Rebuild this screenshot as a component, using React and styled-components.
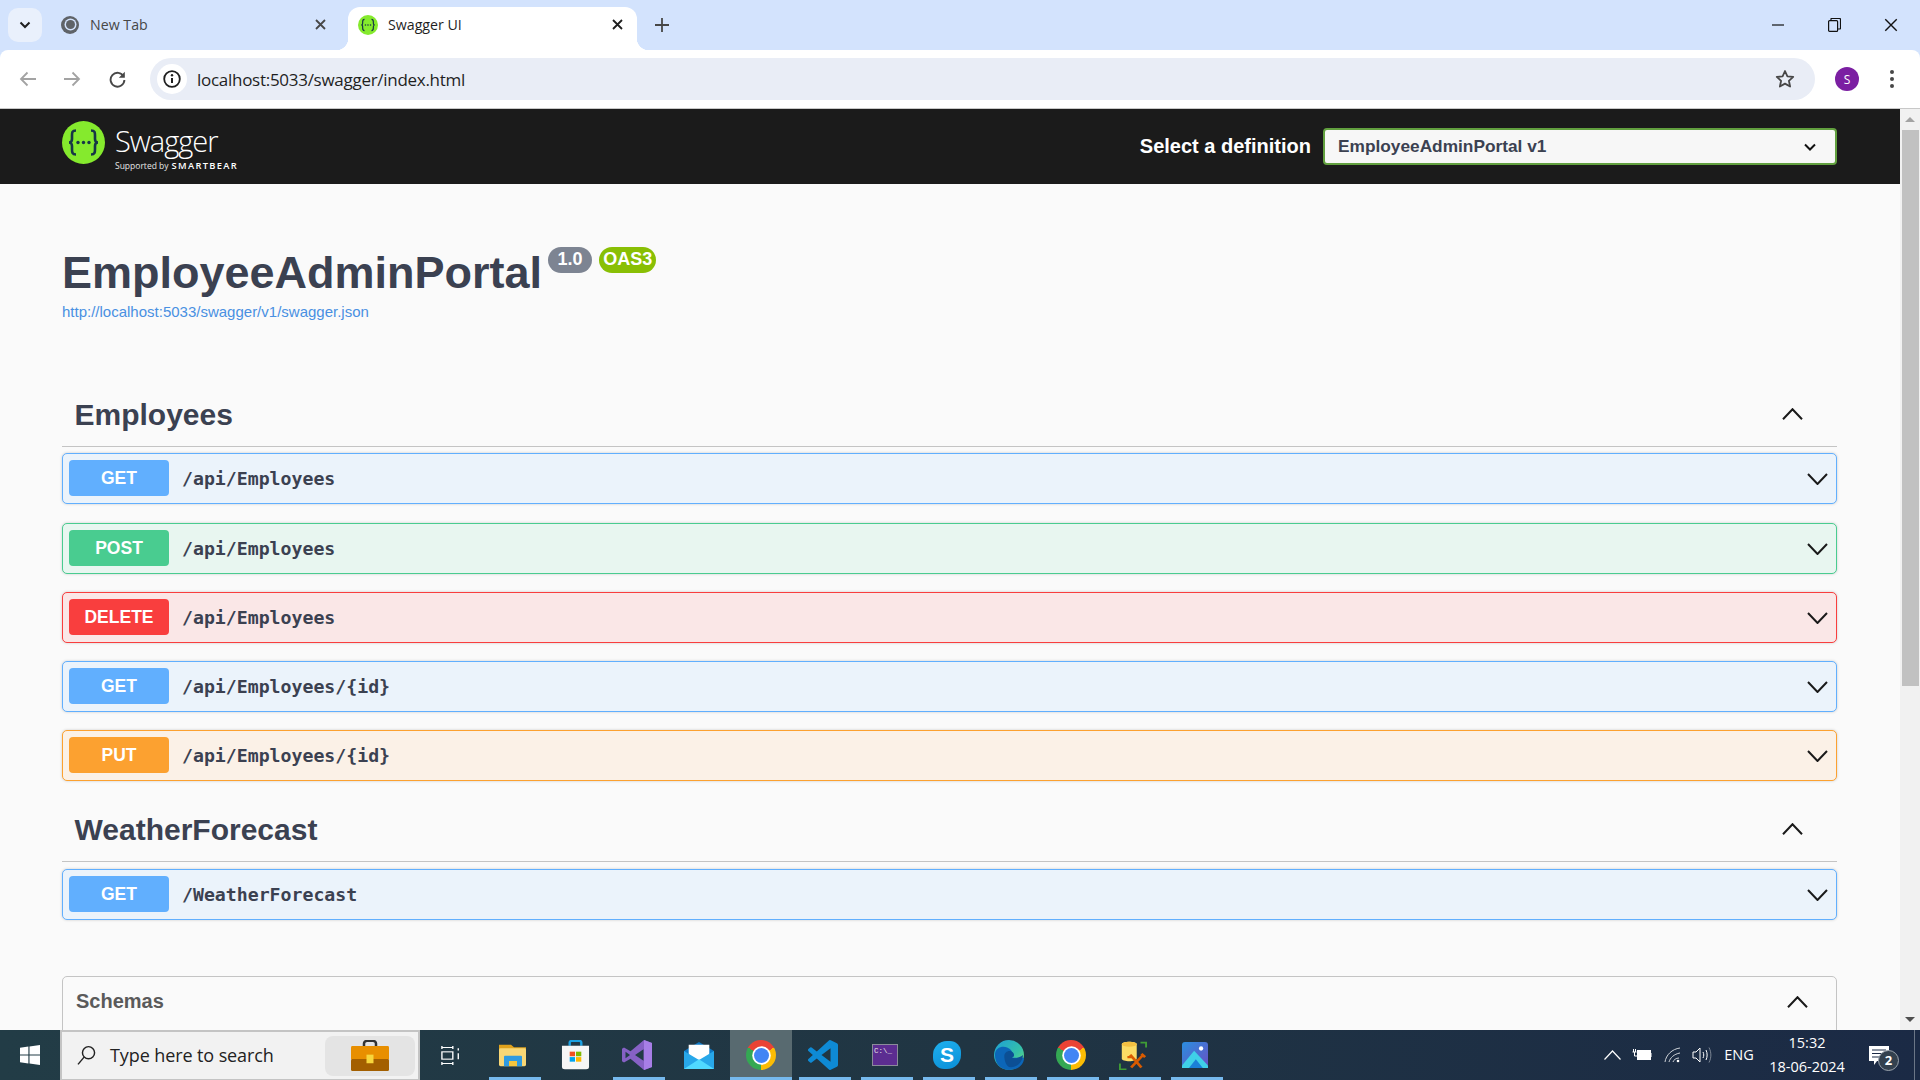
import React from "react"
import styled, { createGlobalStyle } from "styled-components"

const GlobalStyle = createGlobalStyle`
  html, body {
    margin: 0;
    padding: 0;
    height: 100%;
    overflow: hidden;
    background: #fafafa;
  }
  * { box-sizing: border-box; }
`

const UI_FONT = `"Open Sans", "Noto Sans", sans-serif`
const SWAGGER_FONT = `"Liberation Sans", Arial, sans-serif`

const methodColors = {
  GET: { solid: "#61affe", tint: "#ebf3fb" },
  POST: { solid: "#49cc90", tint: "#e8f6f0" },
  DELETE: { solid: "#f93e3e", tint: "#fae7e7" },
  PUT: { solid: "#fca130", tint: "#fbf1e7" },
}

const Screen = styled.div`
  width: 1920px;
  height: 1080px;
  display: flex;
  flex-direction: column;
  overflow: hidden;
  background: #d3e3fd;
`

/* browser chrome */
const TabStrip = styled.div`
  height: 50px;
  flex: none;
  display: flex;
  align-items: flex-end;
  font-family: ${UI_FONT};
`
const TabSearch = styled.div`
  width: 34px;
  height: 34px;
  margin: 0 8px 8px 8px;
  border-radius: 10px;
  background: #e9f0fc;
  display: flex;
  align-items: center;
  justify-content: center;
`
const Tab = styled.div`
  position: relative;
  height: 43px;
  display: flex;
  align-items: center;
  width: ${p => p.$width}px;
  padding: 0 12px 8px ${p => p.$pad}px;
  border-radius: 12px 12px 0 0;
  background: ${p => (p.$active ? "#fff" : "transparent")};
  color: ${p => (p.$active ? "#1f1f1f" : "#474747")};
  font-size: 14.2px;
  ${p =>
    p.$active &&
    `
    &::before, &::after {
      content: "";
      position: absolute;
      bottom: 0;
      width: 12px;
      height: 12px;
    }
    &::before {
      left: -12px;
      background: radial-gradient(circle at 0 0, transparent 12px, #fff 12.5px);
    }
    &::after {
      right: -12px;
      background: radial-gradient(circle at 100% 0, transparent 12px, #fff 12.5px);
    }
  `}
`
const TabTitle = styled.span`
  flex: 1;
  margin-left: ${p => p.$gap}px;
  white-space: nowrap;
`
const TabClose = styled.div`
  width: 16px;
  display: flex;
  justify-content: center;
  margin-right: ${p => p.$right}px;
  margin-top: -1px;
`
const NewTab = styled.div`
  margin: 0 0 18px 18px;
  display: flex;
`
const WindowControls = styled.div`
  margin-left: auto;
  margin-right: 1px;
  align-self: stretch;
  display: flex;
`
const WindowButton = styled.div`
  width: ${p => p.$w || 56}px;
  height: 50px;
  padding-bottom: 1px;
  display: flex;
  align-items: center;
  justify-content: center;
`
const Toolbar = styled.div`
  height: 59px;
  flex: none;
  display: flex;
  align-items: flex-start;
  padding: 8px 26px 0 6px;
  background: #fff;
  border-radius: 8px 8px 0 0;
  border-bottom: 1px solid #c8c8c8;
  font-family: ${UI_FONT};
`
const NavButton = styled.div`
  width: ${p => p.$w || 44}px;
  height: 42px;
  display: flex;
  align-items: center;
  justify-content: center;
`
const Omnibox = styled.div`
  flex: 1;
  height: 42px;
  margin-left: 10px;
  padding: 0 20px 0 7px;
  border-radius: 21px;
  background: #e9edf6;
  display: flex;
  align-items: center;
`
const SiteInfo = styled.div`
  width: 30px;
  height: 30px;
  border-radius: 50%;
  background: #fff;
  display: flex;
  align-items: center;
  justify-content: center;
`
const Url = styled.span`
  flex: 1;
  margin-left: 10px;
  font-size: 17px;
  color: #1f1f1f;
  letter-spacing: -0.28px;
`
const Avatar = styled.div`
  width: 24px;
  height: 24px;
  margin: 9px 0 0 20px;
  border-radius: 50%;
  background: #7b1fa2;
  color: #fff;
  font-size: 12px;
  display: flex;
  align-items: center;
  justify-content: center;
`
const MenuDots = styled.div`
  width: 4px;
  height: 42px;
  margin-left: 31px;
  display: flex;
  flex-direction: column;
  align-items: center;
  justify-content: center;
  gap: 3px;
  & > i {
    width: 4px;
    height: 4px;
    border-radius: 50%;
    background: #474747;
  }
`

/* page */
const Viewport = styled.div`
  flex: 1;
  min-height: 0;
  display: flex;
  background: #fafafa;
  overflow: hidden;
`
const Page = styled.div`
  flex: 1;
  min-width: 0;
  font-family: ${SWAGGER_FONT};
  color: #3b4151;
`
const Topbar = styled.header`
  height: 75px;
  padding: 0 63px 0 62px;
  background: #1b1b1b;
  display: flex;
  align-items: center;
`
const LogoWrap = styled.div`
  display: flex;
  align-items: flex-start;
`
const LogoText = styled.div`
  margin-left: 10px;
  color: #fff;
  display: flex;
  flex-direction: column;
`
const LogoName = styled.span`
  font-family: ${UI_FONT};
  font-size: 29px;
  line-height: 34px;
  font-weight: 300;
  letter-spacing: -1px;
  margin-top: 3px;
`
const LogoSub = styled.span`
  font-family: ${UI_FONT};
  font-size: 8.5px;
  line-height: 12px;
  margin-top: 2px;
  white-space: nowrap;
  color: #e6e6e6;
  & > b {
    font-size: 9.3px;
    font-weight: 600;
    letter-spacing: 1.35px;
    margin-left: 3px;
    color: #fff;
  }
`
const DefinitionWrap = styled.div`
  margin-left: auto;
  display: flex;
  align-items: center;
  gap: 12px;
`
const DefinitionLabel = styled.span`
  color: #fff;
  font-size: 20px;
  font-weight: 700;
`
const DefinitionSelect = styled.div`
  width: 514px;
  height: 37px;
  padding: 0 19px 0 13px;
  border: 2px solid #62a03f;
  border-radius: 4px;
  background: #f7f7f7;
  display: flex;
  align-items: center;
  justify-content: space-between;
  font-size: 17.3px;
  font-weight: 700;
  color: #3b4151;
`
const Content = styled.main`
  padding: 62px 63px 0 62px;
`
const TitleRow = styled.div`
  display: flex;
  align-items: flex-start;
  gap: 7px;
`
const Title = styled.h1`
  margin: 1px -1px -1px 0;
  font-size: 45px;
  line-height: 52px;
  font-weight: 700;
`
const Badge = styled.span`
  height: 26px;
  margin-top: 1px;
  padding: 0 ${p => p.$pad}px;
  border-radius: 13px;
  background: ${p => p.$color};
  color: #fff;
  font-size: 18px;
  font-weight: 700;
  line-height: 25px;
`
const SpecLink = styled.a`
  display: block;
  margin-top: 4px;
  font-size: 15px;
  line-height: 20px;
  color: #4990e2;
`
const SectionHeader = styled.div`
  height: 63px;
  margin-top: ${p => p.$top}px;
  padding: 0 34px 0 12.5px;
  border-bottom: 1px solid #c4c4c4;
  display: flex;
  align-items: center;
  justify-content: space-between;
`
const SectionName = styled.h3`
  margin: 0;
  font-size: 30px;
  font-weight: 700;
`
const SectionToggle = styled.div`
  display: flex;
  margin-top: -2px;
`
const OpRow = styled.div`
  height: 51px;
  margin-top: ${p => p.$top}px;
  padding: 0 8px 0 6px;
  border: 1px solid ${p => methodColors[p.$method].solid};
  border-radius: 5px;
  background: ${p => methodColors[p.$method].tint};
  box-shadow: 0 0 3px rgba(0, 0, 0, 0.19);
  display: flex;
  align-items: center;
`
const MethodBadge = styled.span`
  width: 100px;
  height: 36px;
  margin-bottom: 1px;
  border-radius: 4px;
  background: ${p => methodColors[p.$method].solid};
  color: #fff;
  font-size: 17.5px;
  font-weight: 700;
  line-height: 36px;
  text-align: center;
`
const OpPath = styled.span`
  flex: 1;
  margin-left: 13px;
  font-family: "DejaVu Sans Mono", "Liberation Mono", monospace;
  font-size: 18.2px;
  font-weight: 600;
  color: #3b4151;
`
const SchemasBox = styled.section`
  height: 200px;
  margin-top: 56px;
  padding: 11px 28px 0 13px;
  border: 1px solid #c4c4c4;
  border-radius: 5px;
  display: flex;
  align-items: flex-start;
  justify-content: space-between;
`
const SchemasTitle = styled.span`
  font-size: 20px;
  line-height: 26px;
  font-weight: 700;
  color: #5a5a5a;
`
const SchemasToggle = styled.div`
  display: flex;
  margin-top: 8px;
`
const Scrollbar = styled.div`
  width: 20px;
  flex: none;
  background: #f1f1f1;
  display: flex;
  flex-direction: column;
  align-items: center;
`
const ScrollArrow = styled.div`
  height: 21px;
  margin-top: ${p => (p.$down ? "auto" : "0")};
  display: flex;
  align-items: center;
  &::before {
    content: "";
    border-left: 5px solid transparent;
    border-right: 5px solid transparent;
    ${p => (p.$down ? "border-top: 5px solid #505050;" : "border-bottom: 5px solid #a3a3a3;")}
  }
`
const ScrollThumb = styled.div`
  width: 17px;
  height: 556px;
  background: #c1c1c1;
`

/* windows taskbar */
const Taskbar = styled.footer`
  height: 50px;
  flex: none;
  display: flex;
  align-items: stretch;
  background: linear-gradient(90deg, #223c46 0%, #203543 50%, #1b2a45 100%);
  font-family: ${UI_FONT};
`
const StartButton = styled.div`
  width: 60px;
  display: flex;
  align-items: center;
  justify-content: center;
`
const SearchBox = styled.div`
  width: 360px;
  padding: 0 3px 0 14px;
  border: 2px solid #c4c4c4;
  border-bottom-width: 1px;
  background: #f2f2f2;
  display: flex;
  align-items: center;
`
const SearchText = styled.span`
  flex: 1;
  margin-left: 13px;
  margin-top: -2px;
  font-size: 18px;
  letter-spacing: -0.1px;
  color: #222;
`
const SearchPromo = styled.div`
  width: 90px;
  height: 40px;
  border-radius: 8px;
  background: #e4e4e4;
  display: flex;
  align-items: center;
  justify-content: center;
`
const TaskItem = styled.div`
  position: relative;
  width: 62px;
  display: flex;
  align-items: center;
  justify-content: center;
  background: ${p => (p.$active ? "#586a70" : "transparent")};
  &::after {
    content: "";
    display: ${p => (p.$open ? "block" : "none")};
    position: absolute;
    bottom: 0;
    left: ${p => (p.$active ? 0 : 7)}px;
    right: ${p => (p.$active ? 0 : 3)}px;
    height: 3px;
    background: #76b9ed;
  }
`
const Tray = styled.div`
  margin-left: auto;
  display: flex;
  color: #fff;
`
const TrayItem = styled.div`
  position: relative;
  width: ${p => p.$w}px;
  display: flex;
  flex-direction: column;
  align-items: center;
  justify-content: center;
  font-size: ${p => p.$size || 14.5}px;
  line-height: 24px;
`
const NotifyBadge = styled.span`
  position: absolute;
  top: 20px;
  left: 26px;
  width: 21px;
  height: 21px;
  border-radius: 50%;
  border: 1px solid #9aa3ad;
  background: #33414f;
  color: #fff;
  font-size: 13px;
  font-weight: 700;
  line-height: 19px;
  text-align: center;
`
const ShowDesktop = styled.div`
  width: 14px;
  padding-left: 8px;
  &::before {
    content: "";
    display: block;
    width: 1px;
    height: 100%;
    background: #6b7686;
  }
`
const ChromeBall = styled.div`
  width: ${p => p.$size}px;
  height: ${p => p.$size}px;
  flex: none;
  border-radius: 50%;
  background: ${p =>
    p.$mono
      ? "#5f6368"
      : "conic-gradient(from 300deg, #ea4335 0 120deg, #fbbc04 120deg 240deg, #34a853 240deg 360deg)"};
  display: flex;
  align-items: center;
  justify-content: center;
  &::after {
    content: "";
    width: 50%;
    height: 50%;
    border-radius: 50%;
    background: ${p => (p.$mono ? "#5f6368" : "#4285f4")};
    box-shadow: 0 0 0 ${p => Math.max(p.$size * 0.06, 1.5)}px ${p => (p.$mono ? "#d3e3fd" : "#fff")};
  }
`
const SkypeIcon = styled.div`
  width: 28px;
  height: 28px;
  border-radius: 50% 40% 50% 40%;
  background: linear-gradient(160deg, #1fb0ee, #0a8fd8);
  color: #fff;
  font-family: ${SWAGGER_FONT};
  font-size: 21px;
  font-weight: 700;
  line-height: 28px;
  text-align: center;
`
const ConsoleIcon = styled.div`
  width: 26px;
  height: 22px;
  padding: 0 0 0 1px;
  border: 1px solid #8b8b9a;
  background: #5c2d91;
  color: #e6e6e6;
  font-family: "Liberation Mono", monospace;
  font-size: 7.5px;
  line-height: 12px;
`

const Chevron = ({ up, width = 21, height = 12, sw = 2 }) => (
  <svg width={width} height={height} viewBox="0 0 21 12" fill="none">
    <path
      d={up ? "M1 11.2L10.5 1.2 20 11.2" : "M1 1L10.5 11 20 1"}
      stroke="#1a1a1a"
      strokeWidth={sw}
    />
  </svg>
)

const CloseX = ({ color = "#474747", size = 11, sw = 1.8 }) => (
  <svg width={size} height={size} viewBox="0 0 11 11">
    <path d="M1 1l9 9M10 1l-9 9" stroke={color} strokeWidth={sw} />
  </svg>
)

const SwaggerMark = ({ size }) => (
  <svg width={size} height={size} viewBox="0 0 43 43">
    <circle cx="21.5" cy="21.5" r="21.5" fill="#85ea2d" />
    <g fill="none" stroke="#173647" strokeWidth="2.6">
      <path d="M14 9.5c-4 0-4 2-4 5v3.5c0 2-1 3.5-3 3.5 2 0 3 1.500 3 3.500V28c0 3 0 5.500 4 5.500" />
      <path d="M29 9.500c4 0 4 2 4 5V18c0 2 1 3.500 3 3.500-2 0-3 1.500-3 3.500v3c0 3 0 5.500-4 5.500" />
    </g>
    <g fill="#173647">
      <circle cx="16" cy="21.500" r="1.700" />
      <circle cx="21.500" cy="21.500" r="1.700" />
      <circle cx="27" cy="21.500" r="1.700" />
    </g>
  </svg>
)

const WindowsLogo = () => (
  <svg width="20" height="20" viewBox="0 0 21 21" fill="#fff">
    <path d="M0 3l8.800-1.300v8.300H0zM10 1.500L21 0v10H10zM0 11h8.800v8.400L0 18zM10 11h11v10l-11-1.600z" />
  </svg>
)

const Briefcase = () => (
  <svg width="38" height="31" viewBox="0 0 38 36" preserveAspectRatio="none">
    <path d="M13 8V4a3 3 0 0 1 3-3h6a3 3 0 0 1 3 3v4" fill="none" stroke="#333" strokeWidth="2.500" />
    <rect x="0" y="7" width="38" height="16" rx="1.500" fill="#e88f00" />
    <rect x="0" y="22" width="38" height="14" rx="1.500" fill="#a35f00" />
    <rect x="15.500" y="17" width="7" height="10" fill="#f7d63c" />
  </svg>
)

const TaskView = () => (
  <svg width="20" height="19" viewBox="0 0 22 26" fill="none" stroke="#fff" strokeWidth="1.500" preserveAspectRatio="none">
    <path d="M1 2h12M13 0v4M1 0v4M1 24h12M1 22v4M13 22v4" />
    <rect x="1" y="8" width="12" height="10" />
    <path d="M19 3v3M19 10v8" />
  </svg>
)

const FolderIcon = () => (
  <svg width="28" height="24" viewBox="0 0 28 28" preserveAspectRatio="none">
    <path d="M0 2h12l3 3h12v3H0z" fill="#e0a21c" />
    <rect x="0" y="6" width="27" height="21" rx="1.500" fill="#f8d775" />
    <path d="M5 27V16a1 1 0 0 1 1-1h16a1 1 0 0 1 1 1v11h-5v-6h-8v6z" fill="#2f9be0" />
    <rect x="10" y="21" width="8" height="6" fill="#f4c63d" />
  </svg>
)

const StoreIcon = () => (
  <svg width="29" height="30" viewBox="0 0 30 36" preserveAspectRatio="none">
    <path d="M9 7V3a2 2 0 0 1 2-2h8a2 2 0 0 1 2 2v4" fill="none" stroke="#1ba1e2" strokeWidth="2.500" />
    <path d="M1 7h28v25a3 3 0 0 1-3 3H4a3 3 0 0 1-3-3z" fill="#f6f6f6" />
    <rect x="9" y="14" width="5.500" height="5.500" fill="#f25022" />
    <rect x="15.500" y="14" width="5.500" height="5.500" fill="#7fba00" />
    <rect x="9" y="20.500" width="5.500" height="5.500" fill="#00a4ef" />
    <rect x="15.500" y="20.500" width="5.500" height="5.500" fill="#ffb900" />
  </svg>
)

const VisualStudioIcon = () => (
  <svg width="30" height="30" viewBox="0 0 30 36" preserveAspectRatio="none">
    <path d="M22 0l8 3.500v29L22 36 8.500 22.500 2 27l-2-1.500v-15L2 9l6.500 4.500z" fill="#8661c5" />
    <path d="M22 0l8 3.500v29L22 36z" fill="#a77ee6" />
    <path d="M21.500 11L13 18l8.500 7zM3.500 14v8L8 18z" fill="#223c46" />
  </svg>
)

const MailIcon = () => (
  <svg width="30" height="29" viewBox="0 0 32 32" preserveAspectRatio="none">
    <path d="M0 11L16 1l16 10v19H0z" fill="#0f7ac6" />
    <path d="M5 4h22v15L16 25 5 19z" fill="#fff" />
    <path d="M0 11l16 10 16-10v20H0z" fill="#28a8ea" />
    <path d="M0 31l16-11 16 11z" fill="#50d9ff" />
  </svg>
)

const VSCodeIcon = () => (
  <svg width="30" height="30" viewBox="0 0 24 24">
    <path
      fill="#0e8ad5"
      d="M23.150 2.587L18.210.21a1.494 1.494 0 0 0-1.705.29l-9.460 8.630-4.120-3.128a.999.999 0 0 0-1.276.057L.327 7.261A1 1 0 0 0 .326 8.740L3.899 12 .326 15.260a1 1 0 0 0 .001 1.479L1.650 17.940a.999.999 0 0 0 1.276.057l4.120-3.128 9.460 8.630a1.492 1.492 0 0 0 1.704.29l4.942-2.377A1.500 1.500 0 0 0 24 20.060V3.939a1.500 1.500 0 0 0-.85-1.352zm-5.146 14.861L10.826 12l7.178-5.448v10.896z"
    />
  </svg>
)

const EdgeIcon = () => (
  <svg width="30" height="30" viewBox="0 0 32 32">
    <defs>
      <linearGradient id="edgeTop" x1="0" y1="0" x2="1" y2="1">
        <stop offset="0" stopColor="#1d9fd8" />
        <stop offset="0.6" stopColor="#35c1a8" />
        <stop offset="1" stopColor="#7ce36d" />
      </linearGradient>
    </defs>
    <circle cx="16" cy="16" r="16" fill="url(#edgeTop)" />
    <path d="M1 16C1 8 9 6 14 8c6 2 7 8 4 11h14c0 8-7 13-16 13C7 32 1 25 1 16z" fill="#0c66b8" />
    <path d="M11 17c0-4 5-7 9-4 2 2 2 5-1 6 4 1 8 0 12-3-1 9-8 14-14 13-4-1-6-7-6-12z" fill="#0c4f94" />
  </svg>
)

const DatabaseToolIcon = () => (
  <svg width="28" height="29" viewBox="0 0 30 36" fill="none" preserveAspectRatio="none">
    <path d="M3 4c0-4 16-4 16 0v18c0 4-16 4-16 0z" fill="#fbdc65" />
    <ellipse cx="11" cy="4" rx="8" ry="3" fill="#f4c042" />
    <path d="M23 2h6v6M1 28v7h7" stroke="#3f9c35" strokeWidth="2" />
    <path d="M12 17l12 16M26 17L13 33M9 20l5 0M24 16l4 4" stroke="#d95b00" strokeWidth="3" />
  </svg>
)

const PhotosIcon = () => (
  <svg width="26" height="26" viewBox="0 0 30 30">
    <defs>
      <linearGradient id="photoBg" x1="0" y1="0" x2="1" y2="1">
        <stop offset="0" stopColor="#2a8fe0" />
        <stop offset="1" stopColor="#6a4fc3" />
      </linearGradient>
    </defs>
    <rect width="30" height="30" rx="3.500" fill="url(#photoBg)" />
    <circle cx="22" cy="7.500" r="2.500" fill="#fff" />
    <path d="M0 27L14 10l16 17v3H0z" fill="#3fd0e8" />
    <path d="M8 30l8-10 8 10z" fill="#1b7fd8" />
  </svg>
)

const taskApps = [
  { key: "explorer", icon: <FolderIcon />, open: true },
  { key: "store", icon: <StoreIcon /> },
  { key: "vs", icon: <VisualStudioIcon />, open: true },
  { key: "mail", icon: <MailIcon /> },
  { key: "chrome", icon: <ChromeBall $size={30} />, open: true, active: true },
  { key: "vscode", icon: <VSCodeIcon />, open: true },
  { key: "console", icon: <ConsoleIcon>C:\_</ConsoleIcon>, open: true },
  { key: "skype", icon: <SkypeIcon>S</SkypeIcon>, open: true },
  { key: "edge", icon: <EdgeIcon />, open: true },
  { key: "chrome2", icon: <ChromeBall $size={30} />, open: true },
  { key: "ssms", icon: <DatabaseToolIcon />, open: true },
  { key: "photos", icon: <PhotosIcon />, open: true },
]

const Operation = ({ method, path, top }) => (
  <OpRow $method={method} $top={top}>
    <MethodBadge $method={method}>{method}</MethodBadge>
    <OpPath>{path}</OpPath>
    <Chevron />
  </OpRow>
)

const App = () => (
  <Screen>
    <GlobalStyle />
    <TabStrip>
      <TabSearch>
        <svg width="12" height="8" viewBox="0 0 12 8" fill="none">
          <path d="M1.500 1.500L6 6l4.500-4.500" stroke="#1f1f1f" strokeWidth="2" />
        </svg>
      </TabSearch>
      <Tab $width="298" $pad="11">
        <ChromeBall $size={18} $mono />
        <TabTitle $gap="11">New Tab</TabTitle>
        <TabClose $right="8">
          <CloseX />
        </TabClose>
      </Tab>
      <Tab $active $width="289" $pad="10">
        <SwaggerMark size={20} />
        <TabTitle $gap="10">Swagger UI</TabTitle>
        <TabClose $right="0">
          <CloseX color="#1f1f1f" />
        </TabClose>
      </Tab>
      <NewTab>
        <svg width="14" height="14" viewBox="0 0 14 14">
          <path d="M7 0v14M0 7h14" stroke="#474747" strokeWidth="1.800" />
        </svg>
      </NewTab>
      <WindowControls>
        <WindowButton>
          <svg width="12" height="2" viewBox="0 0 12 2">
            <path d="M0 1h12" stroke="#111" strokeWidth="1.200" />
          </svg>
        </WindowButton>
        <WindowButton>
          <svg width="13" height="14" viewBox="0 0 13 14" fill="none" stroke="#111" strokeWidth="1.200">
            <rect x="0.600" y="2.600" width="9" height="10.800" rx="1" />
            <path d="M3 2.500V1a.5.5 0 0 1 .5-.5h8a1 1 0 0 1 1 1V10a1 1 0 0 1-1 1H10" />
          </svg>
        </WindowButton>
        <WindowButton $w={57}>
          <CloseX color="#111" size={14} sw={1.1} />
        </WindowButton>
      </WindowControls>
    </TabStrip>

    <Toolbar>
      <NavButton>
        <svg width="18" height="16" viewBox="0 0 18 16" fill="none" stroke="#a3a3a3" strokeWidth="1.800">
          <path d="M17 8H2M8.500 1.500L2 8l6.500 6.500" />
        </svg>
      </NavButton>
      <NavButton>
        <svg width="18" height="16" viewBox="0 0 18 16" fill="none" stroke="#a3a3a3" strokeWidth="1.800">
          <path d="M1 8h15M9.500 1.500L16 8l-6.500 6.500" />
        </svg>
      </NavButton>
      <NavButton $w={46}>
        <svg width="17" height="17" viewBox="0 0 17 17" fill="none">
          <path d="M14.600 5.500A6.900 6.900 0 1 0 15.400 9" stroke="#474747" strokeWidth="1.900" />
          <path d="M15.800 0.800v6h-6z" fill="#474747" />
        </svg>
      </NavButton>
      <Omnibox>
        <SiteInfo>
          <svg width="18" height="18" viewBox="0 0 18 18" fill="none">
            <circle cx="9" cy="9" r="7.800" stroke="#1f1f1f" strokeWidth="1.800" />
            <path d="M9 8v5" stroke="#1f1f1f" strokeWidth="2" />
            <circle cx="9" cy="5.300" r="1.200" fill="#1f1f1f" />
          </svg>
        </SiteInfo>
        <Url>localhost:5033/swagger/index.html</Url>
        <svg width="20" height="20" viewBox="0 0 20 20" fill="none">
          <path
            d="M10 2l2.400 5.300 5.800.6-4.300 3.900 1.200 5.700L10 14.600l-5.100 2.900 1.200-5.700L1.800 7.900l5.800-.6z"
            stroke="#474747"
            strokeWidth="1.800"
            strokeLinejoin="round"
          />
        </svg>
      </Omnibox>
      <Avatar>S</Avatar>
      <MenuDots>
        <i />
        <i />
        <i />
      </MenuDots>
    </Toolbar>

    <Viewport>
      <Page>
        <Topbar>
          <LogoWrap>
            <SwaggerMark size={43} />
            <LogoText>
              <LogoName>Swagger</LogoName>
              <LogoSub>
                Supported by<b>SMARTBEAR</b>
              </LogoSub>
            </LogoText>
          </LogoWrap>
          <DefinitionWrap>
            <DefinitionLabel>Select a definition</DefinitionLabel>
            <DefinitionSelect>
              EmployeeAdminPortal v1
              <svg width="12" height="8" viewBox="0 0 12 8" fill="none">
                <path d="M1 1.500L6 6.500l5-5" stroke="#111" strokeWidth="2" />
              </svg>
            </DefinitionSelect>
          </DefinitionWrap>
        </Topbar>
        <Content>
          <TitleRow>
            <Title>EmployeeAdminPortal</Title>
            <Badge $color="#7d8492" $pad="9.5">1.0</Badge>
            <Badge $color="#89bf04" $pad="4">OAS3</Badge>
          </TitleRow>
          <SpecLink>http://localhost:5033/swagger/v1/swagger.json</SpecLink>

          <SectionHeader $top="62">
            <SectionName>Employees</SectionName>
            <SectionToggle>
              <Chevron up />
            </SectionToggle>
          </SectionHeader>
          <Operation method="GET" path="/api/Employees" top={6} />
          <Operation method="POST" path="/api/Employees" top={19} />
          <Operation method="DELETE" path="/api/Employees" top={18} />
          <Operation method="GET" path="/api/Employees/{id}" top={18} />
          <Operation method="PUT" path="/api/Employees/{id}" top={18} />

          <SectionHeader $top="18">
            <SectionName>WeatherForecast</SectionName>
            <SectionToggle>
              <Chevron up />
            </SectionToggle>
          </SectionHeader>
          <Operation method="GET" path="/WeatherForecast" top={7} />

          <SchemasBox>
            <SchemasTitle>Schemas</SchemasTitle>
            <SchemasToggle>
              <Chevron up />
            </SchemasToggle>
          </SchemasBox>
        </Content>
      </Page>
      <Scrollbar>
        <ScrollArrow />
        <ScrollThumb />
        <ScrollArrow $down />
      </Scrollbar>
    </Viewport>

    <Taskbar>
      <StartButton>
        <WindowsLogo />
      </StartButton>
      <SearchBox>
        <svg width="21" height="21" viewBox="0 0 24 26" fill="none" stroke="#222" strokeWidth="1.800">
          <circle cx="14.500" cy="9.500" r="7.500" />
          <path d="M9 15L1.500 24" />
        </svg>
        <SearchText>Type here to search</SearchText>
        <SearchPromo>
          <Briefcase />
        </SearchPromo>
      </SearchBox>
      <TaskItem>
        <TaskView />
      </TaskItem>
      {taskApps.map(app => (
        <TaskItem key={app.key} $open={app.open} $active={app.active}>
          {app.icon}
        </TaskItem>
      ))}
      <Tray>
        <TrayItem $w={30}>
          <svg width="17" height="10" viewBox="0 0 17 10" fill="none" stroke="#fff" strokeWidth="1.200">
            <path d="M0.500 9.500L8.500 1l8 8.500" />
          </svg>
        </TrayItem>
        <TrayItem $w={30}>
          <svg width="21" height="12" viewBox="0 0 21 12" fill="none">
            <rect x="5.500" y="1.500" width="13" height="9" fill="#fff" stroke="#fff" />
            <path d="M19 4v4M0.500 3h4M1.500 0v3M3.500 0v3M2.500 3v4h3" stroke="#fff" />
          </svg>
        </TrayItem>
        <TrayItem $w={31}>
          <svg width="17" height="16" viewBox="0 0 17 16" fill="none" stroke="#cfd3d8" strokeWidth="1">
            <path d="M1 15C2 8 8 2 16 1M5 15c1-4 5-8 11-9M9 15c.5-2 3-4 6-4" />
            <circle cx="14" cy="14" r="1.300" fill="#fff" stroke="none" />
          </svg>
        </TrayItem>
        <TrayItem $w={28}>
          <svg width="20" height="18" viewBox="0 0 20 18" fill="none" stroke="#fff" strokeWidth="1">
            <path d="M1 6h3l4-4v14l-4-4H1z" />
            <path d="M11 6c1 2 1 4 0 6M14 4c1.500 3 1.500 7 0 10" />
            <path d="M17 1.500c2.500 5 2.500 10 0 15" stroke="#7c8694" />
          </svg>
        </TrayItem>
        <TrayItem $w={46}>ENG</TrayItem>
        <TrayItem $w={90} $size={14.5}>
          <span>15:32</span>
          <span>18-06-2024</span>
        </TrayItem>
        <TrayItem $w={54}>
          <svg width="21" height="19" viewBox="0 0 21 19">
            <path d="M0 0h20v15H8l-3 4v-4H0z" fill="#fff" />
            <path d="M3 4h14M3 7.500h14M3 11h9" stroke="#1b2a45" />
          </svg>
          <NotifyBadge>2</NotifyBadge>
        </TrayItem>
        <ShowDesktop />
      </Tray>
    </Taskbar>
  </Screen>
)

export default App
